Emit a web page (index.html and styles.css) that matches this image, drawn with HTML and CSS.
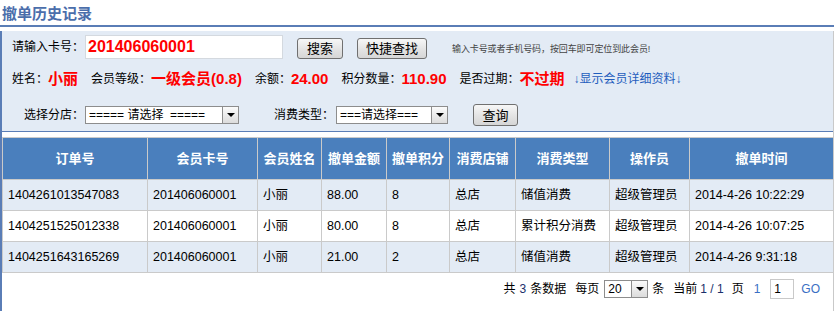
FILE: index.html
```html
<!DOCTYPE html>
<html lang="zh-CN">
<head>
<meta charset="utf-8">
<title>撤单历史记录</title>
<link rel="stylesheet" href="styles.css">
</head>
<body>
<div class="title">撤单历史记录</div>
<div class="rule"></div>
<div class="frame">
  <div class="panel">
    <div class="row row1">
      <span class="lbl">请输入卡号：</span>
      <div class="cardinput">201406060001</div>
      <button class="btn b-search">搜索</button>
      <button class="btn b-quick">快捷查找</button>
      <span class="hint">输入卡号或者手机号码，按回车即可定位到此会员!</span>
    </div>
    <div class="row row2">
      <span class="lbl">姓名：</span><span class="val">小丽</span>
      <span class="lbl">会员等级：</span><span class="val">一级会员(0.8)</span>
      <span class="lbl">余额：</span><span class="val">24.00</span>
      <span class="lbl">积分数量：</span><span class="val">110.90</span>
      <span class="lbl">是否过期：</span><span class="val serif">不过期</span>
      <a class="more">↓显示会员详细资料↓</a>
    </div>
    <div class="row row3">
      <span class="lbl">选择分店：</span>
      <div class="sel sel-shop"><span class="sel-text">===== 请选择 &nbsp;=====</span><span class="arrow"></span></div>
      <span class="lbl lbl-type">消费类型：</span>
      <div class="sel sel-type"><span class="sel-text">===请选择===</span><span class="arrow"></span></div>
      <button class="btn b-query">查询</button>
    </div>
  </div>
  <table class="grid">
    <colgroup>
      <col class="c1"><col class="c2"><col class="c3"><col class="c4"><col class="c5"><col class="c6"><col class="c7"><col class="c8"><col class="c9">
    </colgroup>
    <thead>
      <tr><th>订单号</th><th>会员卡号</th><th>会员姓名</th><th>撤单金额</th><th>撤单积分</th><th>消费店铺</th><th>消费类型</th><th>操作员</th><th>撤单时间</th></tr>
    </thead>
    <tbody>
      <tr class="alt"><td>1404261013547083</td><td>201406060001</td><td>小丽</td><td>88.00</td><td>8</td><td>总店</td><td>储值消费</td><td>超级管理员</td><td>2014-4-26 10:22:29</td></tr>
      <tr><td>1404251525012338</td><td>201406060001</td><td>小丽</td><td>80.00</td><td>8</td><td>总店</td><td>累计积分消费</td><td>超级管理员</td><td>2014-4-26 10:07:25</td></tr>
      <tr class="alt"><td>1404251643165269</td><td>201406060001</td><td>小丽</td><td>21.00</td><td>2</td><td>总店</td><td>储值消费</td><td>超级管理员</td><td>2014-4-26 9:31:18</td></tr>
    </tbody>
  </table>
  <div class="pager">
    <span>共</span><span class="num n3">3</span><span class="m4">条数据</span>
    <span class="m9">每页</span>
    <div class="sel sel-page"><span class="sel-text">20</span><span class="arrow"></span></div>
    <span class="m4">条</span>
    <span class="m9">当前</span><span class="num m3">1 / 1</span><span class="m8">页</span>
    <a class="plink">1</a>
    <div class="pageinput">1</div>
    <a class="go">GO</a>
  </div>
</div>
</body>
</html>
```
FILE: styles.css
```css
* { box-sizing: border-box; }
body {
  margin: 0;
  background: #fff;
  font-family: "Liberation Sans", "Noto Sans CJK SC", sans-serif;
  font-size: 12px;
  line-height: 16px;
  color: #000;
}
.title {
  height: 25px;
  padding-left: 2px;
  line-height: 27px;
  font-size: 15px;
  font-weight: bold;
  color: #4b6eab;
}
.rule { height: 2px; background: #5a7db6; }
.frame {
  margin-top: 4px;
  border-left: 2px solid #5a7db6;
  border-right: 1px solid #c9c9c9;
  height: 280px;
}
.panel {
  background: #e3ebf5;
  border-bottom: 1px solid #5a7db6;
  height: 101px;
  padding-top: 4px;
}
.row { display: flex; align-items: center; }
.row1 { height: 24px; padding-left: 10px; }
.row2 { height: 26px; margin-top: 7px; padding-left: 10px; }
.row3 { height: 22px; margin-top: 12px; padding-left: 22px; }
.lbl { white-space: nowrap; }
.cardinput {
  margin-left: 1px;
  width: 198px;
  height: 24px;
  background: #fff;
  border: 1px solid #d4d9df;
  color: #ff0000;
  font-weight: bold;
  font-size: 16px;
  line-height: 22px;
  padding-left: 2px;
}
.btn {
  height: 21px;
  padding: 0;
  border: 1px solid #707070;
  border-radius: 3px;
  background: linear-gradient(#f7f7f7, #e3e3e3 55%, #d6d6d6);
  font-family: "Liberation Sans", "Noto Sans CJK SC", sans-serif;
  font-size: 13px;
  color: #000;
  line-height: 19px;
}
.b-search { width: 46px; margin-left: 14px; margin-top: 2px; }
.b-quick { width: 70px; margin-left: 14px; margin-top: 2px; }
.hint { margin-left: 25px; font-size: 9px; line-height: 12px; color: #444; margin-top: 3px; letter-spacing: -0.1px; }
.val {
  color: #ff0000;
  font-weight: bold;
  font-size: 15px;
  line-height: 18px;
  margin-right: 13px;
  white-space: nowrap;
}
.val.serif { font-size: 15px; margin-right: 9px; }
.more { color: #1f5dbd; white-space: nowrap; }
.sel {
  height: 18px;
  background: #fff;
  border: 1px solid #8d8d8d;
  display: flex;
  align-items: center;
}
.sel-text { padding-left: 3px; white-space: nowrap; overflow: hidden; flex: 1; line-height: 16px; }
.arrow {
  width: 16px;
  height: 16px;
  border-left: 1px solid #8d8d8d;
  background: linear-gradient(#fbfbfb, #dcdcdc);
  display: flex;
  align-items: center;
  justify-content: center;
}
.arrow::after {
  content: "";
  border-left: 4px solid transparent;
  border-right: 4px solid transparent;
  border-top: 4px solid #000;
}
.sel-shop { width: 154px; margin-left: 1px; }
.lbl-type { margin-left: 35px; }
.sel-type { width: 112px; margin-left: 2px; }
.b-query { width: 45px; height: 22px; margin-left: 25px; }
.grid {
  margin-top: 5px;
  width: 831px;
  border-collapse: collapse;
  table-layout: fixed;
  font-size: 12.5px;
  line-height: 16px;
}
.c1 { width: 145px; } .c2 { width: 110px; } .c3 { width: 64px; } .c4 { width: 65px; }
.c5 { width: 63px; } .c6 { width: 66px; } .c7 { width: 94px; } .c8 { width: 80px; } .c9 { width: 144px; }
.grid th, .grid td { border: 1px solid #cacaca; }
.grid th {
  height: 42px;
  background: #4a7fbd;
  color: #fff;
  font-weight: bold;
  font-size: 13px;
  text-align: center;
  padding: 0;
}
.grid td {
  height: 31px;
  padding: 0 0 0 5px;
  white-space: nowrap;
}
.grid tr.alt td { background: #e3ebf5; }
.pager {
  display: flex;
  align-items: center;
  justify-content: flex-end;
  height: 32px;
  padding-right: 13px;
  white-space: nowrap;
}
.pager .num { color: #1a2f6b; }
.n3 { margin-left: 4px; }
.m3 { margin-left: 3px; }
.m4 { margin-left: 4px; }
.m8 { margin-left: 8px; }
.m9 { margin-left: 9px; }
.sel-page { width: 44px; margin-left: 5px; }
.plink { color: #3a6fc4; margin-left: 10px; }
.pageinput {
  margin-left: 10px;
  width: 24px;
  height: 20px;
  border: 1px solid #c9c9c9;
  background: #fff;
  line-height: 18px;
  padding-left: 3px;
}
.go { color: #3a6fc4; margin-left: 7px; }
```
